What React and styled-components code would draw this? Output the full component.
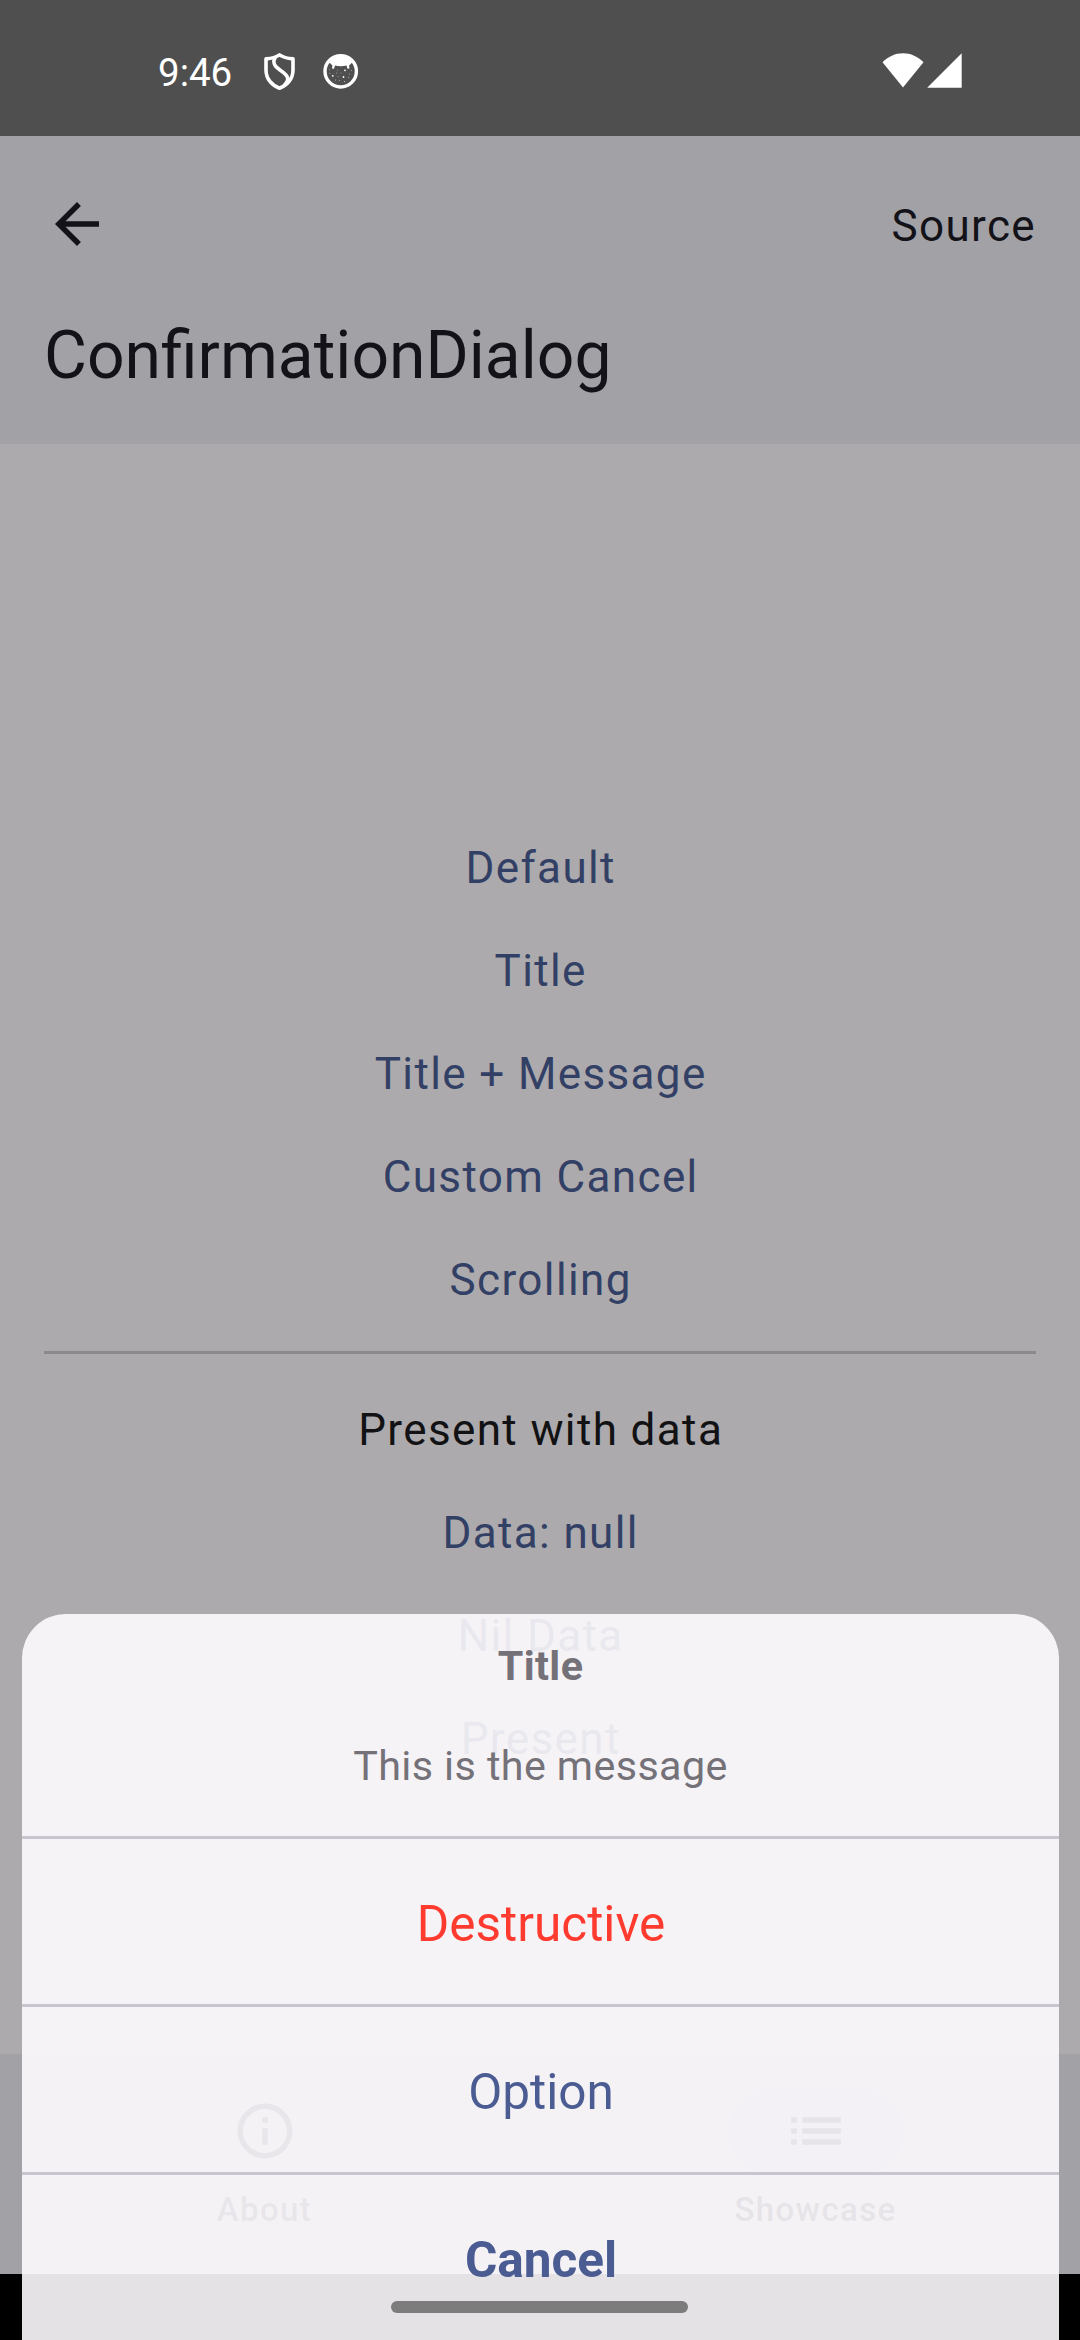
import React from "react";
import styled, { createGlobalStyle } from "styled-components";

const GlobalStyle = createGlobalStyle`
  * { box-sizing: border-box; }
  body {
    margin: 0;
    background: #000;
    font-family: Roboto, "Liberation Sans", sans-serif;
  }
`;

const Screen = styled.div`
  position: relative;
  width: 1080px;
  height: 2340px;
  overflow: hidden;
  display: flex;
  flex-direction: column;
  background: #000;
`;

const StatusBar = styled.div`
  display: flex;
  align-items: flex-start;
  justify-content: space-between;
  height: 136px;
  padding: 53px 118px 0 158px;
  background: #4f4f4f;
  color: #fff;
`;

const StatusGroup = styled.div`
  display: flex;
  align-items: flex-start;
`;

const Clock = styled.span`
  width: 106px;
  font-size: 38.5px;
  line-height: 40px;
`;

const StatusIcon = styled.svg`
  display: block;
  flex: none;
  margin-right: ${(p) => p.$gap || 0}px;
`;

const Header = styled.header`
  display: flex;
  flex-direction: column;
  height: 308px;
  padding: 44px 44px 0;
  background: #a2a1a6;
  color: #131218;
`;

const Toolbar = styled.div`
  display: flex;
  align-items: center;
  justify-content: space-between;
  height: 88px;
`;

const IconButton = styled.button`
  display: flex;
  padding: 0;
  border: 0;
  background: none;
  color: inherit;
`;

const SourceLink = styled.span`
  font-size: 44px;
  line-height: 66px;
  letter-spacing: 1.375px;
  padding-top: 4px;
`;

const PageTitle = styled.h1`
  margin: 44px 0 0;
  font-size: 66px;
  font-weight: 400;
  line-height: 88px;
`;

const Content = styled.main`
  display: flex;
  flex-direction: column;
  height: 1610px;
  padding: 373px 44px 0;
  background: #acaaac;
`;

const Row = styled.div`
  height: 103px;
  padding-left: 1.375px;
  font-size: 44px;
  line-height: 103px;
  letter-spacing: 1.375px;
  text-align: center;
  color: ${(p) => (p.$plain ? "#121113" : "#334066")};
`;

const Divider = styled.hr`
  width: 100%;
  height: 3px;
  margin: 19px 0 25px;
  border: 0;
  background: #8a8a8b;
`;

const NavBar = styled.nav`
  display: flex;
  gap: 22px;
  height: 220px;
  padding-top: 33px;
  background: #a2a1a6;
`;

const NavItem = styled.div`
  flex: 1;
  display: flex;
  flex-direction: column;
  align-items: center;
  gap: 13px;
  color: ${(p) => (p.$active ? "#17181f" : "#312f35")};
`;

const NavPill = styled.div`
  display: flex;
  align-items: center;
  justify-content: center;
  width: 176px;
  height: 88px;
  border-radius: 44px;
  background: ${(p) => (p.$active ? "#9d9daa" : "transparent")};
`;

const NavLabel = styled.span`
  font-size: 33px;
  font-weight: 500;
  line-height: 44px;
  letter-spacing: 1.375px;
`;

const Sheet = styled.section`
  position: absolute;
  left: 22px;
  right: 21px;
  bottom: 0;
  height: 726px;
  display: flex;
  flex-direction: column;
  overflow: hidden;
  border-radius: 44px 44px 0 0;
  background: rgba(253, 251, 254, 0.9);
`;

const SheetHead = styled.div`
  height: 222px;
  padding-top: 22px;
  text-align: center;
  font-size: 41.25px;
  letter-spacing: 0.41px;
  color: #747178;
`;

const SheetTitle = styled.div`
  font-weight: 700;
  line-height: 60px;
`;

const SheetMessage = styled.div`
  margin-top: 40px;
  line-height: 60px;
`;

const SheetAction = styled.button`
  flex: none;
  height: 168px;
  padding: 6px 0 0 1px;
  border: 0;
  border-top: 3px solid #c7c5d0;
  background: none;
  font-family: inherit;
  font-size: 49.5px;
  line-height: 159px;
  font-weight: ${(p) => (p.$bold ? 700 : 400)};
  color: ${(p) => (p.$danger ? "#ff3b30" : "#4a5c92")};
`;

const GestureHandle = styled.div`
  position: absolute;
  left: 391px;
  bottom: 27px;
  width: 297px;
  height: 12px;
  border-radius: 6px;
  background: #7c7c7c;
`;

const ShieldIcon = () => (
  <StatusIcon $gap={28} width="31" height="38" viewBox="0 0 31 38" fill="none" stroke="#fff" strokeWidth="3.6" strokeLinejoin="round">
    <path d="M15.500 1.900C12 4.400 7 5.500 2 5.900V17C2 26 8 32.500 15.500 35.300C23 32.500 29 26 29 17V5.900C24 5.500 19 4.400 15.500 1.900Z" />
    <path d="M12 4.300C9.300 6 9.100 10 11.500 13.200C14.500 17.200 22.500 19.500 23.600 25C24.100 28 22.500 30.300 20 32.500" />
  </StatusIcon>
);

const FaceIcon = () => (
  <StatusIcon width="36" height="37" viewBox="0 0 36 37">
    <circle cx="17.700" cy="18.300" r="15.700" fill="none" stroke="#fff" strokeWidth="3.400" />
    <path d="M6 9C9 4 13 2 17.700 2S26.500 4 29.500 9L26 12.800L26.500 15.500L24.500 15.700L23.500 12.500C20 13.600 15.500 13.600 12 12.500L11 15.700L8.900 15.500L9.500 12.800Z" fill="#fff" />
    <g fill="#fff">
      <circle cx="14.500" cy="17.300" r="0.500" opacity="0.500" />
      <circle cx="22" cy="17.300" r="0.900" />
      <circle cx="6.500" cy="16.500" r="0.500" opacity="0.500" />
      <circle cx="28.500" cy="17.500" r="0.500" opacity="0.600" />
      <circle cx="7" cy="20.500" r="0.500" opacity="0.600" />
      <circle cx="13.500" cy="20" r="0.500" opacity="0.500" />
      <circle cx="18" cy="20" r="0.500" opacity="0.500" />
      <circle cx="26.500" cy="21" r="0.600" opacity="0.500" />
      <circle cx="9.800" cy="22.800" r="0.900" />
      <circle cx="20.500" cy="24" r="0.900" />
      <circle cx="15" cy="23.500" r="0.500" opacity="0.500" />
      <circle cx="25.500" cy="24.500" r="0.600" opacity="0.600" />
      <circle cx="12.500" cy="27" r="0.600" opacity="0.600" />
      <circle cx="16.500" cy="27.500" r="0.600" opacity="0.500" />
      <circle cx="21.500" cy="28.500" r="0.600" opacity="0.700" />
    </g>
  </StatusIcon>
);

const WifiIcon = () => (
  <StatusIcon $gap={3} width="42" height="35" viewBox="0 0 42 35" fill="#fff">
    <path d="M0.500 9.300C6 3.500 13.200 0.200 21 0.200S36 3.500 41.500 9.300L21 34.500Z" />
  </StatusIcon>
);

const SignalIcon = () => (
  <StatusIcon width="35" height="35" viewBox="0 0 35 35" fill="#fff">
    <path d="M34.700 0.200V34.700H0.200Z" />
  </StatusIcon>
);

const MaterialIcon = ({ d }) => (
  <svg width="66" height="66" viewBox="0 0 24 24" fill="currentColor">
    <path d={d} />
  </svg>
);

const ARROW_BACK = "M20 11H7.830l5.590-5.590L12 4l-8 8 8 8 1.410-1.410L7.830 13H20v-2z";
const INFO = "M11 7h2v2h-2zm0 4h2v6h-2zm1-9C6.480 2 2 6.480 2 12s4.480 10 10 10 10-4.480 10-10S17.520 2 12 2zm0 18c-4.410 0-8-3.590-8-8s3.590-8 8-8 8 3.590 8 8-3.590 8-8 8z";
const LIST = "M3 13h2v-2H3v2zm0 4h2v-2H3v2zm0-8h2V7H3v2zm4 4h14v-2H7v2zm0 4h14v-2H7v2zM7 7v2h14V7H7z";

const EXAMPLES = ["Default", "Title", "Title + Message", "Custom Cancel", "Scrolling"];
const DATA_EXAMPLES = ["Data: null", "Nil Data", "Present"];

export default function App() {
  return (
    <>
      <GlobalStyle />
      <Screen>
        <StatusBar>
          <StatusGroup>
            <Clock>9:46</Clock>
            <ShieldIcon />
            <FaceIcon />
          </StatusGroup>
          <StatusGroup>
            <WifiIcon />
            <SignalIcon />
          </StatusGroup>
        </StatusBar>
        <Header>
          <Toolbar>
            <IconButton aria-label="Back">
              <MaterialIcon d={ARROW_BACK} />
            </IconButton>
            <SourceLink>Source</SourceLink>
          </Toolbar>
          <PageTitle>ConfirmationDialog</PageTitle>
        </Header>
        <Content>
          {EXAMPLES.map((label) => (
            <Row key={label}>{label}</Row>
          ))}
          <Divider />
          <Row $plain>Present with data</Row>
          {DATA_EXAMPLES.map((label) => (
            <Row key={label}>{label}</Row>
          ))}
        </Content>
        <NavBar>
          <NavItem>
            <NavPill>
              <MaterialIcon d={INFO} />
            </NavPill>
            <NavLabel>About</NavLabel>
          </NavItem>
          <NavItem $active>
            <NavPill $active>
              <MaterialIcon d={LIST} />
            </NavPill>
            <NavLabel>Showcase</NavLabel>
          </NavItem>
        </NavBar>
        <Sheet>
          <SheetHead>
            <SheetTitle>Title</SheetTitle>
            <SheetMessage>This is the message</SheetMessage>
          </SheetHead>
          <SheetAction $danger>Destructive</SheetAction>
          <SheetAction>Option</SheetAction>
          <SheetAction $bold>Cancel</SheetAction>
        </Sheet>
        <GestureHandle />
      </Screen>
    </>
  );
}
